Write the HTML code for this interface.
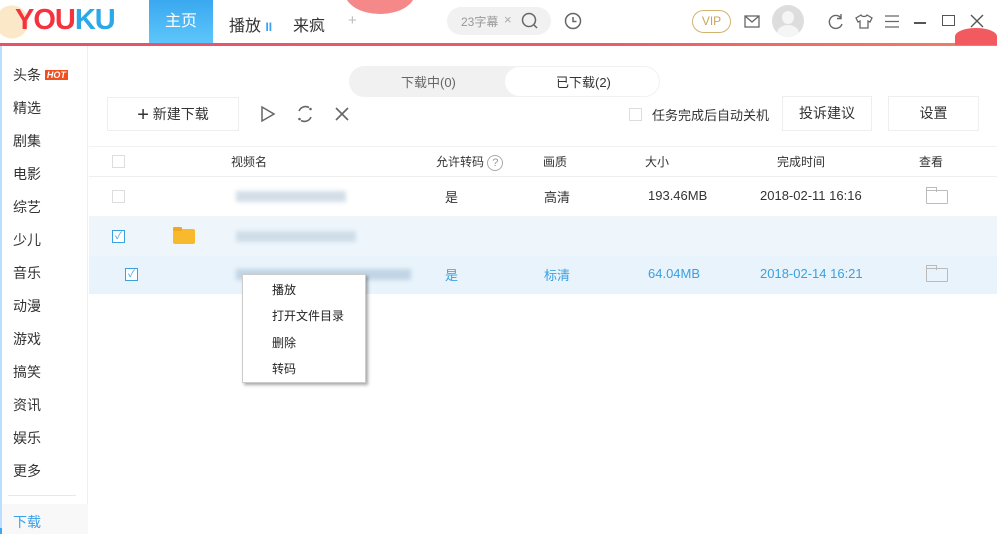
<!DOCTYPE html>
<html><head><meta charset="utf-8"><style>
*{margin:0;padding:0;box-sizing:border-box}
body{width:997px;height:528px;overflow:hidden;background:#fff;font-family:"Liberation Sans","Noto Sans CJK SC",sans-serif;color:#333;position:relative;font-size:13px}
.a{position:absolute;white-space:nowrap}
.side{left:0;top:46px;width:88px;height:482px;border-right:1px solid #eee;background:#fff}
.side .it{position:absolute;left:13px;font-size:14px;color:#333}
.row{position:absolute;left:89px;width:908px}
.cb{position:absolute;width:13px;height:13px;border:1px solid #ddd;background:#fff}
.cb.on{border-color:#3ba0e0}
.btn{position:absolute;border:1px solid #eee;background:#fff;font-size:14px;text-align:center}
.fold{position:absolute;width:22px;height:14px;border:1px solid #bbb;border-radius:1px}
.fold:before{content:"";position:absolute;left:-1px;top:-4px;width:9px;height:4px;border:1px solid #bbb;border-bottom:none}
.menu{left:242px;top:274px;width:124px;height:109px;background:#fff;border:1px solid #ccc;box-shadow:2px 2px 3px rgba(0,0,0,.35)}
.menu div{position:absolute;left:29px;font-size:12px;color:#222}
.blur{position:absolute;height:11px;background:#c8d6e2;filter:blur(2px);opacity:.8}
</style></head><body>
<div class="a" style="left:0;top:0;width:997px;height:43px;background:#fff"></div>
<div class="a" style="left:0;top:43px;width:997px;height:3px;background:linear-gradient(90deg,#e9506a,#ee5a6a 60%,#f08060)"></div>
<div class="a" style="left:0;top:0;width:40px;height:43px;background:radial-gradient(circle at 12px 22px,#fbe8c8 0,#fbe8c8 16px,transparent 17px)"></div>
<div class="a" style="left:345px;top:-28px;width:70px;height:42px;border-radius:50%;background:#f36a6a;opacity:.8"></div>
<div class="a" style="left:955px;top:28px;width:42px;height:17px;border-radius:50% 50% 0 0;background:#f25a60"></div>
<div class="a" style="left:15px;top:4px;font-size:29px;font-weight:bold;letter-spacing:-1px"><span style="color:#f5333f">YOU</span><span style="color:#2aa8e8">KU</span></div>
<div class="a" style="left:149px;top:0;width:64px;height:43px;background:linear-gradient(#3aa8f0,#5cc6fb);color:#fff;font-size:16px;text-align:center;line-height:43px">主页</div>
<div class="a" style="left:229px;top:12px;font-size:16px">播放 <span style="color:#3aa0f0;font-size:12px;font-weight:bold">II</span></div>
<div class="a" style="left:293px;top:12px;font-size:16px">来疯</div>
<div class="a" style="left:348px;top:12px;font-size:15px;color:#bbb">+</div>
<div class="a" style="left:447px;top:7px;width:104px;height:28px;border-radius:14px;background:#f1f1f1"></div>
<div class="a" style="left:461px;top:13px;font-size:12px;color:#999">23字幕</div>
<div class="a" style="left:504px;top:12px;font-size:13px;color:#aaa">×</div>
<svg class="a" style="left:520px;top:11px" width="20" height="20"><circle cx="9" cy="9" r="6.5" fill="none" stroke="#666" stroke-width="1.5"/><line x1="14" y1="14" x2="17" y2="17" stroke="#666" stroke-width="1.5"/></svg>
<svg class="a" style="left:563px;top:11px" width="20" height="20"><circle cx="10" cy="10" r="7.5" fill="none" stroke="#666" stroke-width="1.5"/><path d="M10 6v4.5h3.5" fill="none" stroke="#666" stroke-width="1.5"/></svg>
<div class="a" style="left:692px;top:10px;width:39px;height:23px;border:1.5px solid #d4b271;border-radius:12px;color:#c9a35c;font-size:12px;text-align:center;line-height:20px">VIP</div>
<svg class="a" style="left:744px;top:15px" width="16" height="14"><rect x="1" y="1" width="14" height="11" fill="none" stroke="#666" stroke-width="1.3"/><path d="M1 1l7 6 7-6" fill="none" stroke="#666" stroke-width="1.3"/></svg>
<div class="a" style="left:772px;top:5px;width:32px;height:32px;border-radius:50%;background:#ddd;overflow:hidden"><div style="position:absolute;left:10px;top:6px;width:12px;height:13px;border-radius:50%;background:#f5f5f5"></div><div style="position:absolute;left:5px;top:20px;width:22px;height:16px;border-radius:50%;background:#f5f5f5"></div></div>
<svg class="a" style="left:827px;top:13px" width="18" height="18"><path d="M14 5A6.5 6.5 0 1 0 15 11" fill="none" stroke="#666" stroke-width="1.4"/><path d="M14 1v4.5h-4" fill="none" stroke="#666" stroke-width="1.4"/></svg>
<svg class="a" style="left:855px;top:13px" width="18" height="17"><path d="M6 2L1 5l2 4 2-1v7h8V8l2 1 2-4-5-3c-1 2-5 2-6 0z" fill="none" stroke="#666" stroke-width="1.3"/></svg>
<svg class="a" style="left:884px;top:14px" width="16" height="15"><path d="M1 2h14M1 7.5h14M1 13h14" stroke="#666" stroke-width="1.3"/></svg>
<div class="a" style="left:914px;top:22px;width:12px;height:1.5px;background:#555"></div>
<div class="a" style="left:942px;top:15px;width:13px;height:11px;border:1.5px solid #555"></div>
<svg class="a" style="left:970px;top:14px" width="14" height="14"><path d="M1 1l12 12M13 1L1 13" stroke="#555" stroke-width="1.4"/></svg>
<div class="a side">
<div class="it" style="top:19px">头条 <span style="background:#f24e1e;color:#fff;font-size:9px;font-weight:bold;font-style:italic;padding:0 2px;vertical-align:2px">HOT</span></div>
<div class="it" style="top:52px">精选</div><div class="it" style="top:85px">剧集</div><div class="it" style="top:118px">电影</div><div class="it" style="top:151px">综艺</div><div class="it" style="top:184px">少儿</div><div class="it" style="top:217px">音乐</div><div class="it" style="top:250px">动漫</div><div class="it" style="top:283px">游戏</div><div class="it" style="top:316px">搞笑</div><div class="it" style="top:349px">资讯</div><div class="it" style="top:382px">娱乐</div><div class="it" style="top:415px">更多</div>
<div style="position:absolute;left:8px;top:449px;width:68px;height:1px;background:#e8e8e8"></div>
<div style="position:absolute;left:0;top:458px;width:88px;height:30px;background:#f8f8f8;border-left:2px solid #3aa8f0"></div>
<div class="it" style="top:466px;color:#3aa0e8">下载</div>
</div>
<div class="a" style="left:0;top:46px;width:2px;height:482px;background:#bdf"></div>
<div class="a" style="left:349px;top:66px;width:311px;height:31px;border-radius:16px;background:#f1f1f1"></div>
<div class="a" style="left:505px;top:67px;width:154px;height:29px;border-radius:15px;background:#fff"></div>
<div class="a" style="left:401px;top:72px;font-size:13px;color:#666">下载中(0)</div>
<div class="a" style="left:556px;top:72px;font-size:13px;color:#333">已下载(2)</div>
<div class="btn" style="left:107px;top:97px;width:132px;height:34px;line-height:32px;color:#333"><span style="font-size:20px;vertical-align:-2px">+</span> 新建下载</div>
<svg class="a" style="left:259px;top:105px" width="18" height="18"><path d="M3 2l12 7-12 7z" fill="none" stroke="#666" stroke-width="1.5"/></svg>
<svg class="a" style="left:295px;top:104px" width="20" height="20"><path d="M4 7A7 7 0 0 1 14 3.5M16 13A7 7 0 0 1 6 16.5" fill="none" stroke="#666" stroke-width="1.6"/><circle cx="15.5" cy="5" r="1.3" fill="#666"/><circle cx="4.5" cy="15" r="1.3" fill="#666"/></svg>
<svg class="a" style="left:334px;top:106px" width="16" height="16"><path d="M2 2l12 12M14 2L2 14" stroke="#666" stroke-width="1.6"/></svg>
<div class="cb" style="left:629px;top:108px"></div>
<div class="a" style="left:652px;top:105px;font-size:13px">任务完成后自动关机</div>
<div class="btn" style="left:782px;top:96px;width:90px;height:35px;line-height:33px">投诉建议</div>
<div class="btn" style="left:888px;top:96px;width:91px;height:35px;line-height:33px">设置</div>
<div class="row" style="top:146px;height:31px;border-top:1px solid #f2f2f2;border-bottom:1px solid #eee"></div>
<div class="cb" style="left:112px;top:155px"></div>
<div class="a" style="left:231px;top:153px;font-size:12px">视频名</div>
<div class="a" style="left:436px;top:153px;font-size:12px">允许转码 <span style="display:inline-block;width:16px;height:16px;border:1px solid #aaa;border-radius:50%;text-align:center;font-size:11px;line-height:14px;color:#999">?</span></div>
<div class="a" style="left:543px;top:153px;font-size:12px">画质</div>
<div class="a" style="left:645px;top:153px;font-size:12px">大小</div>
<div class="a" style="left:777px;top:153px;font-size:12px">完成时间</div>
<div class="a" style="left:919px;top:153px;font-size:12px">查看</div>
<div class="cb" style="left:112px;top:190px"></div>
<div class="blur" style="left:236px;top:191px;width:110px"></div>
<div class="a" style="left:445px;top:187px;font-size:13px">是</div>
<div class="a" style="left:544px;top:187px;font-size:13px">高清</div>
<div class="a" style="left:648px;top:188px;font-size:13px">193.46MB</div>
<div class="a" style="left:760px;top:188px;font-size:13px">2018-02-11 16:16</div>
<div class="fold" style="left:926px;top:190px"></div>
<div class="row" style="top:216px;height:40px;background:#eef6fc"></div>
<div class="row" style="top:256px;height:38px;background:#e8f3fb"></div>
<div class="cb on" style="left:112px;top:230px;font-size:10px;color:#3ba0e0;line-height:11px;text-align:center">✓</div>
<div class="a" style="left:173px;top:229px;width:22px;height:15px;background:#f8b92c;border-radius:2px"></div>
<div class="a" style="left:173px;top:227px;width:9px;height:4px;background:#f0a81e;border-radius:1px"></div>
<div class="blur" style="left:236px;top:231px;width:120px"></div>
<div class="cb on" style="left:125px;top:268px;font-size:10px;color:#3ba0e0;line-height:11px;text-align:center">✓</div>
<div class="blur" style="left:236px;top:269px;width:175px;background:#b8cde0"></div>
<div class="a" style="left:445px;top:265px;font-size:13px;color:#3aa0e0">是</div>
<div class="a" style="left:544px;top:265px;font-size:13px;color:#3aa0e0">标清</div>
<div class="a" style="left:648px;top:266px;font-size:13px;color:#3aa0e0">64.04MB</div>
<div class="a" style="left:760px;top:266px;font-size:13px;color:#3aa0e0">2018-02-14 16:21</div>
<div class="fold" style="left:926px;top:268px"></div>
<div class="a menu">
<div style="top:6px">播放</div><div style="top:32px">打开文件目录</div><div style="top:59px">删除</div><div style="top:85px">转码</div>
</div>
</body></html>
